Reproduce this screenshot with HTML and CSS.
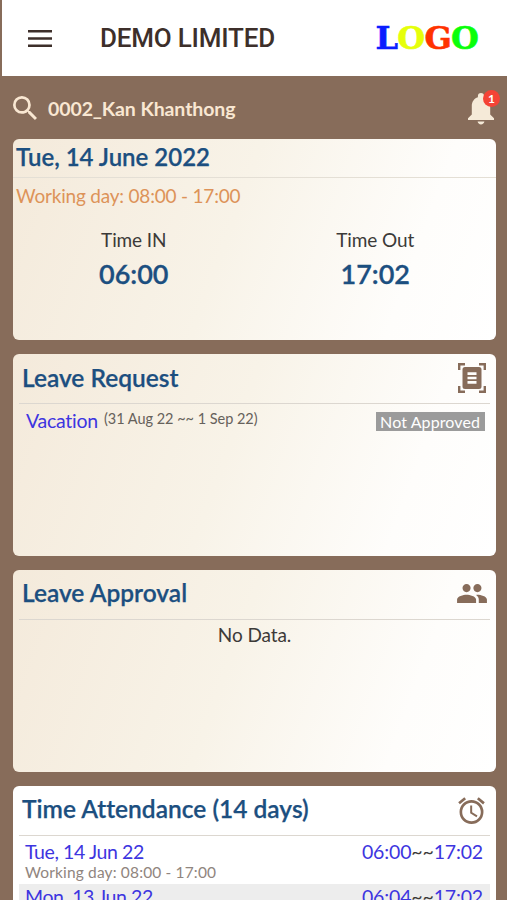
FILE: index.html
```html
<!DOCTYPE html>
<html lang="en">
<head>
    <meta charset="UTF-8">
    <meta name="viewport" content="width=device-width, initial-scale=1.0">
    <title>DEMO LIMITED</title>
    <link rel="stylesheet" href="styles.css">
</head>
<body>
    <header class="topbar">
        <svg class="menu-icon" viewBox="0 0 24 18"><path d="M0 0h24v2.600H0zM0 7.200h24v2.600H0zM0 14.400h24V17H0z"/></svg>
        <h1>DEMO LIMITED</h1>
        <div class="logo"><span class="l1">L</span><span class="l2">O</span><span class="l3">G</span><span class="l4">O</span></div>
    </header>

    <div class="userbar">
        <svg class="search-icon" viewBox="3 3 17.5 17.5"><path d="M15.5 14h-.79l-.28-.27A6.471 6.471 0 0 0 16 9.5 6.5 6.5 0 1 0 9.5 16c1.61 0 3.09-.59 4.23-1.57l.27.28v.79l5 4.99L20.49 19l-4.99-5zm-6 0C7.01 14 5 11.99 5 9.5S7.01 5 9.5 5 14 7.01 14 9.5 11.99 14 9.5 14z"/></svg>
        <span class="user-name">0002_Kan Khanthong</span>
        <div class="bell">
            <svg viewBox="0 0 26 32"><path d="M13 0c-1.900 0-3.100 1.300-3.100 3v1.200C5.800 5.500 3.800 9 3.800 13v8.500L0 25.300V27h26v-1.700l-3.800-3.800V13c0-4-2-7.500-6.100-8.800V3c0-1.700-1.200-3-3.100-3zM9.600 28.500c.3 1.700 1.700 2.900 3.400 2.900s3.100-1.200 3.400-2.900z"/></svg>
            <span class="bell-count">1</span>
        </div>
    </div>

    <main class="cards">
        <section class="card today">
            <h2>Tue, 14 June 2022</h2>
            <p class="working-day">Working day: 08:00 - 17:00</p>
            <div class="times">
                <div class="time">
                    <span class="time-label">Time IN</span>
                    <span class="time-value">06:00</span>
                </div>
                <div class="time">
                    <span class="time-label">Time Out</span>
                    <span class="time-value">17:02</span>
                </div>
            </div>
        </section>

        <section class="card">
            <div class="card-header">
                <h2 class="title-request">Leave Request</h2>
                <svg class="scan-icon" viewBox="0 0 28 30">
                    <path class="stroke" d="M1.200 7V1.200H7M21 1.200h5.800V7M26.800 23v5.800H21M7 28.800H1.200V23"/>
                    <path fill-rule="evenodd" d="M7 4h14a2.500 2.500 0 0 1 2.500 2.500v17A2.500 2.500 0 0 1 21 26H7a2.500 2.500 0 0 1-2.500-2.500v-17A2.500 2.500 0 0 1 7 4zM9.500 9.300v2.600h9V9.300zM9.500 13.700v2.600h9v-2.600zM9.500 18.100v2.600h9v-2.600z"/>
                </svg>
            </div>
            <div class="leave-row">
                <span class="leave-type">Vacation</span>
                <span class="leave-date">(31 Aug 22 ~~ 1 Sep 22)</span>
                <span class="leave-status">Not Approved</span>
            </div>
        </section>

        <section class="card">
            <div class="card-header">
                <h2 class="title-approval">Leave Approval</h2>
                <svg class="people-icon" viewBox="1 5 22 14"><path d="M16 11c1.660 0 2.990-1.340 2.990-3S17.660 5 16 5s-3 1.340-3 3 1.340 3 3 3zm-8 0c1.660 0 2.990-1.340 2.990-3S9.660 5 8 5 5 6.340 5 8s1.340 3 3 3zm0 2c-2.330 0-7 1.170-7 3.500V19h14v-2.500c0-2.330-4.670-3.500-7-3.500zm8 0c-.29 0-.62.020-.97.050 1.160.84 1.970 1.970 1.970 3.450V19h6v-2.500c0-2.330-4.670-3.500-7-3.500z"/></svg>
            </div>
            <p class="no-data">No Data.</p>
        </section>

        <section class="card attendance">
            <div class="card-header">
                <h2 class="title-attendance">Time Attendance (14 days)</h2>
                <svg class="alarm-icon" viewBox="2 1.700 20 20.300"><path d="M22 5.720l-4.600-3.860-1.290 1.530 4.600 3.860L22 5.720zM7.880 3.390L6.600 1.860 2 5.710l1.290 1.530 4.590-3.850zM12.500 8H11v6l4.750 2.850.75-1.230-4-2.370V8zM12 4c-4.970 0-9 4.030-9 9s4.020 9 9 9a9 9 0 0 0 0-18zm0 16c-3.870 0-7-3.130-7-7s3.130-7 7-7 7 3.130 7 7-3.130 7-7 7z"/></svg>
            </div>
            <div class="att-row">
                <div class="att-main">
                    <span class="att-date">Tue, 14 Jun 22</span>
                    <span>06:00<span class="tilde">~~</span>17:02</span>
                </div>
                <div class="att-sub">Working day: 08:00 - 17:00</div>
            </div>
            <div class="att-row shaded">
                <div class="att-main">
                    <span class="att-date">Mon, 13 Jun 22</span>
                    <span>06:04<span class="tilde">~~</span>17:02</span>
                </div>
            </div>
        </section>
    </main>
</body>
</html>
```
FILE: styles.css
```css
* {
    box-sizing: border-box;
}
body {
    margin: 0;
    height: 900px;
    overflow: hidden;
    background: #876c5a;
    font-family: Lato, "Liberation Sans", sans-serif;
    font-variant-ligatures: none;
    color: #3c3a38;
}
h1, h2, p {
    margin: 0;
}
svg {
    display: block;
    flex: none;
    fill: #876c5a;
}
.topbar {
    display: flex;
    align-items: center;
    height: 76px;
    margin-left: 2px;
    padding: 0 29px 0 26px;
    background: #fff;
}
.menu-icon {
    width: 24px;
    height: 18px;
    margin-top: 2px;
    fill: #3d2f2a;
}
.topbar h1 {
    margin-left: 48px;
    font-family: Roboto, sans-serif;
    font-size: 26px;
    font-weight: 500;
    letter-spacing: -0.2px;
    color: #3d2f2a;
    white-space: nowrap;
}
.logo {
    margin-left: auto;
    font-family: "DejaVu Serif", serif;
    font-size: 32px;
    font-weight: bold;
    letter-spacing: -0.8px;
    -webkit-text-stroke: 0.6px;
}
.l1 { color: #0a1eff; }
.l2 { color: #e6ff0a; }
.l3 { color: #ff3200; }
.l4 { color: #0aff0a; }

.userbar {
    display: flex;
    align-items: center;
    height: 62.6px;
    padding: 3px 13px 0 13px;
}
.search-icon {
    width: 24px;
    height: 24px;
    margin-top: -1px;
    fill: #f9e7d2;
}
.user-name {
    margin-left: 11px;
    font-size: 19.5px;
    font-weight: bold;
    letter-spacing: -0.1px;
    color: #f9e7d2;
}
.bell {
    position: relative;
    margin-left: auto;
}
.bell svg {
    width: 26px;
    height: 32px;
    fill: #f5ead8;
}
.bell-count {
    position: absolute;
    top: -3px;
    right: -6px;
    width: 17px;
    height: 17px;
    border-radius: 50%;
    background: #f44336;
    color: #fff;
    font-size: 12px;
    font-weight: bold;
    line-height: 17px;
    text-align: center;
}

.cards {
    display: flex;
    flex-direction: column;
    gap: 14px;
    padding: 0 11px 0 13px;
}
.card {
    height: 201.7px;
    flex: none;
    padding: 0 6px;
    border-radius: 6px;
    background: linear-gradient(110deg, #f4eadb 0%, #f8f3e8 45%, #fefdfb 80%, #fff 100%);
}
.card h2 {
    padding-bottom: 3px;
    font-size: 24.5px;
    font-weight: 600;
    color: #1c4f80;
    white-space: nowrap;
    -webkit-text-stroke: 0.25px;
}
.card.today {
    padding: 0;
}
.card.today h2 {
    height: 39px;
    padding: 0 0 0 3px;
    border-bottom: 1.5px solid #e4dfd5;
    font-size: 24px;
    line-height: 36px;
}
.working-day {
    padding-left: 3px;
    font-size: 19px;
    line-height: 35px;
    letter-spacing: -0.2px;
    color: #dd9359;
}
.times {
    display: flex;
    margin-top: 14px;
}
.time {
    flex: 1;
    display: flex;
    flex-direction: column;
    align-items: center;
}
.time-label {
    font-size: 19px;
    line-height: 26px;
    letter-spacing: -0.1px;
}
.time-value {
    font-size: 27px;
    font-weight: 600;
    line-height: 41px;
    color: #1c4f80;
    -webkit-text-stroke: 0.3px;
}
.card-header {
    display: flex;
    align-items: center;
    justify-content: space-between;
    height: 50px;
    padding: 0 4px 0 3px;
    border-bottom: 1px solid #dcd7d0;
}
.scan-icon {
    width: 28px;
    height: 30px;
    margin-top: -1px;
}
.people-icon {
    width: 30px;
    height: 19px;
    margin: -1px -1px 0 0;
}
.alarm-icon {
    width: 27px;
    height: 27px;
    margin-right: 1px;
}
.scan-icon .stroke {
    fill: none;
    stroke: #876c5a;
    stroke-width: 2.4;
}
.leave-row {
    display: flex;
    align-items: center;
    height: 33px;
    padding: 0 5px 0 7px;
}
.leave-type {
    font-size: 19.5px;
    letter-spacing: -0.25px;
    color: #3d35e0;
}
.leave-date {
    margin: -4px 0 0 6px;
    font-size: 14.5px;
    letter-spacing: -0.02px;
    color: #66615b;
}
.leave-status {
    height: 19px;
    margin: 2px 0 0 auto;
    padding: 0 5px 0 4px;
    background: #9b9b9b;
    color: #fff;
    font-size: 16px;
    letter-spacing: 0.1px;
    line-height: 19px;
}
.no-data {
    font-size: 19px;
    line-height: 29px;
    letter-spacing: -0.1px;
    text-align: center;
}
.card.attendance {
    height: 114px;
    border-radius: 6px 6px 0 0;
    overflow: hidden;
    background: #fff;
}
.att-row {
    height: 48px;
    padding: 3px 7px 0 6px;
}
.att-row.shaded {
    padding-top: 0;
    background: #ededed;
}
.att-main {
    display: flex;
    justify-content: space-between;
    font-size: 19.5px;
    line-height: 25px;
    letter-spacing: -0.15px;
    color: #3d35e0;
}
.att-date {
    letter-spacing: -0.4px;
}
.tilde {
    color: #3c3a38;
}
.att-sub {
    font-size: 15.5px;
    line-height: 17px;
    letter-spacing: 0.15px;
    color: #90857e;
}
```
